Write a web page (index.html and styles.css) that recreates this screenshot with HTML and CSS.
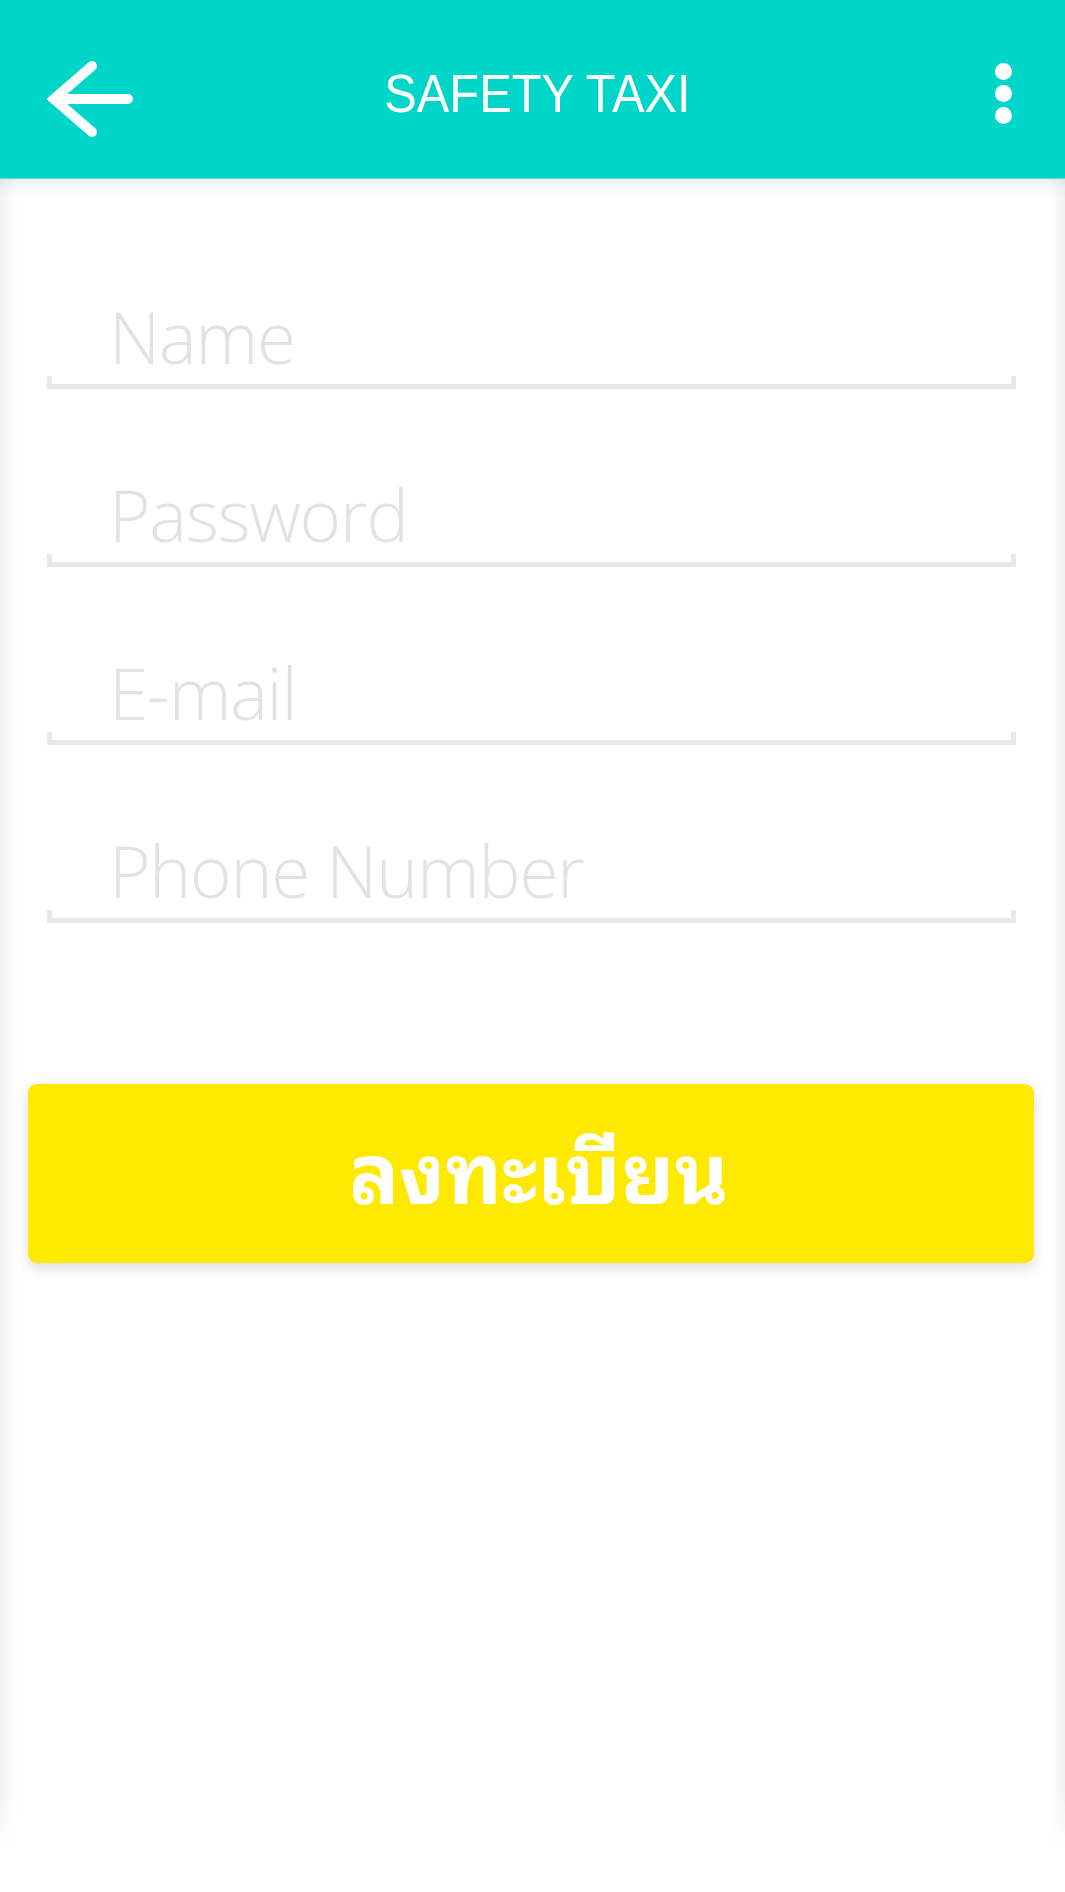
FILE: index.html
```html
<!DOCTYPE html>
<html lang="th">
<head>
<meta charset="utf-8">
<title>Safety Taxi</title>
<link rel="stylesheet" href="styles.css">
</head>
<body>
<header class="appbar">
  <div class="bar-left">
    <button class="icon-btn back" aria-label="Back">
      <svg width="100" height="90" viewBox="0 0 100 90">
        <path d="M90 45 H16 M54 12 L16 45 L54 78" fill="none" stroke="#fff" stroke-width="10" stroke-linecap="round" stroke-linejoin="miter"/>
      </svg>
    </button>
  </div>
  <h1 class="title">SAFETY TAXI</h1>
  <div class="bar-right">
    <button class="icon-btn menu" aria-label="More">
      <span class="dot"></span><span class="dot"></span><span class="dot"></span>
    </button>
  </div>
</header>
<main class="panel">
  <form class="form">
    <div class="field"><div class="placeholder">Name</div><div class="underline"></div></div>
    <div class="field"><div class="placeholder">Password</div><div class="underline"></div></div>
    <div class="field"><div class="placeholder">E-mail</div><div class="underline"></div></div>
    <div class="field"><div class="placeholder">Phone Number</div><div class="underline"></div></div>
    <button type="button" class="submit">ลงทะเบียน</button>
  </form>
</main>
</body>
</html>
```
FILE: styles.css
```css
html, body {
  margin: 0;
  padding: 0;
  background: #ffffff;
}
body {
  width: 1065px;
  height: 1892px;
  overflow: hidden;
  font-family: "Liberation Sans", Arial, sans-serif;
}
.appbar {
  height: 179px;
  background: #00d5c9;
  display: grid;
  grid-template-columns: 1fr auto 1fr;
  align-items: center;
  position: relative;
  z-index: 2;
  box-sizing: border-box;
  border-bottom: 1px solid #4fe0d7;
}
.bar-left {
  display: flex;
  justify-content: flex-start;
}
.bar-right {
  display: flex;
  justify-content: flex-end;
}
.icon-btn {
  background: none;
  border: 0;
  padding: 0;
  margin: 0;
  cursor: pointer;
}
.back {
  width: 100px;
  height: 90px;
  margin-left: 38px;
  margin-top: 19px;
}
.back svg { display: block; }
.title {
  margin: 8px 0 0 10px;
  color: #ffffff;
  font-family: "Liberation Sans", Arial, sans-serif;
  font-weight: 400;
  font-size: 53px;
  transform: scaleX(0.92);
}
.menu {
  width: 20px;
  display: flex;
  flex-direction: column;
  align-items: center;
  gap: 5px;
  margin-right: 52px;
  margin-top: 8px;
}
.dot {
  width: 17px;
  height: 17px;
  border-radius: 50%;
  background: #ffffff;
}
.panel {
  height: 1671px;
  box-shadow:
    inset 18px 0 16px -12px rgba(0, 0, 0, 0.07),
    inset -18px 0 16px -12px rgba(0, 0, 0, 0.07),
    inset 0 18px 16px -12px rgba(0, 0, 0, 0.08);
  -webkit-mask-image: linear-gradient(to bottom, #000 calc(100% - 60px), transparent);
  mask-image: linear-gradient(to bottom, #000 calc(100% - 60px), transparent);
}
.form {
  padding-top: 110px;
  display: flex;
  flex-direction: column;
}
.field {
  margin-left: 47px;
  width: 969px;
  margin-bottom: 78px;
}
.placeholder {
  font-family: "Open Sans", "Noto Sans", sans-serif;
  font-weight: 300;
  font-size: 71px;
  line-height: 80px;
  color: #e2e2e2;
  padding-left: 62px;
  margin-top: 8px;
  margin-bottom: -1px;
  letter-spacing: -1.2px;
}
.underline {
  height: 13px;
  box-sizing: border-box;
  border-left: 5px solid #e8e8e8;
  border-right: 5px solid #e8e8e8;
  border-bottom: 5px solid #e8e8e8;
}
.submit {
  margin: 83px 0 0 28px;
  width: 1006px;
  height: 179px;
  border: 0;
  border-radius: 9px;
  background: #ffe900;
  color: #ffffff;
  font-family: "Noto Sans Thai Looped", "Noto Sans Thai", "Loma", "Garuda", "Tlwg Typo", sans-serif;
  font-weight: 700;
  font-size: 83px;
  line-height: 1;
  box-shadow: 0 5px 14px rgba(0, 0, 0, 0.14);
  padding: 0 0 14px 16px;
}
```
